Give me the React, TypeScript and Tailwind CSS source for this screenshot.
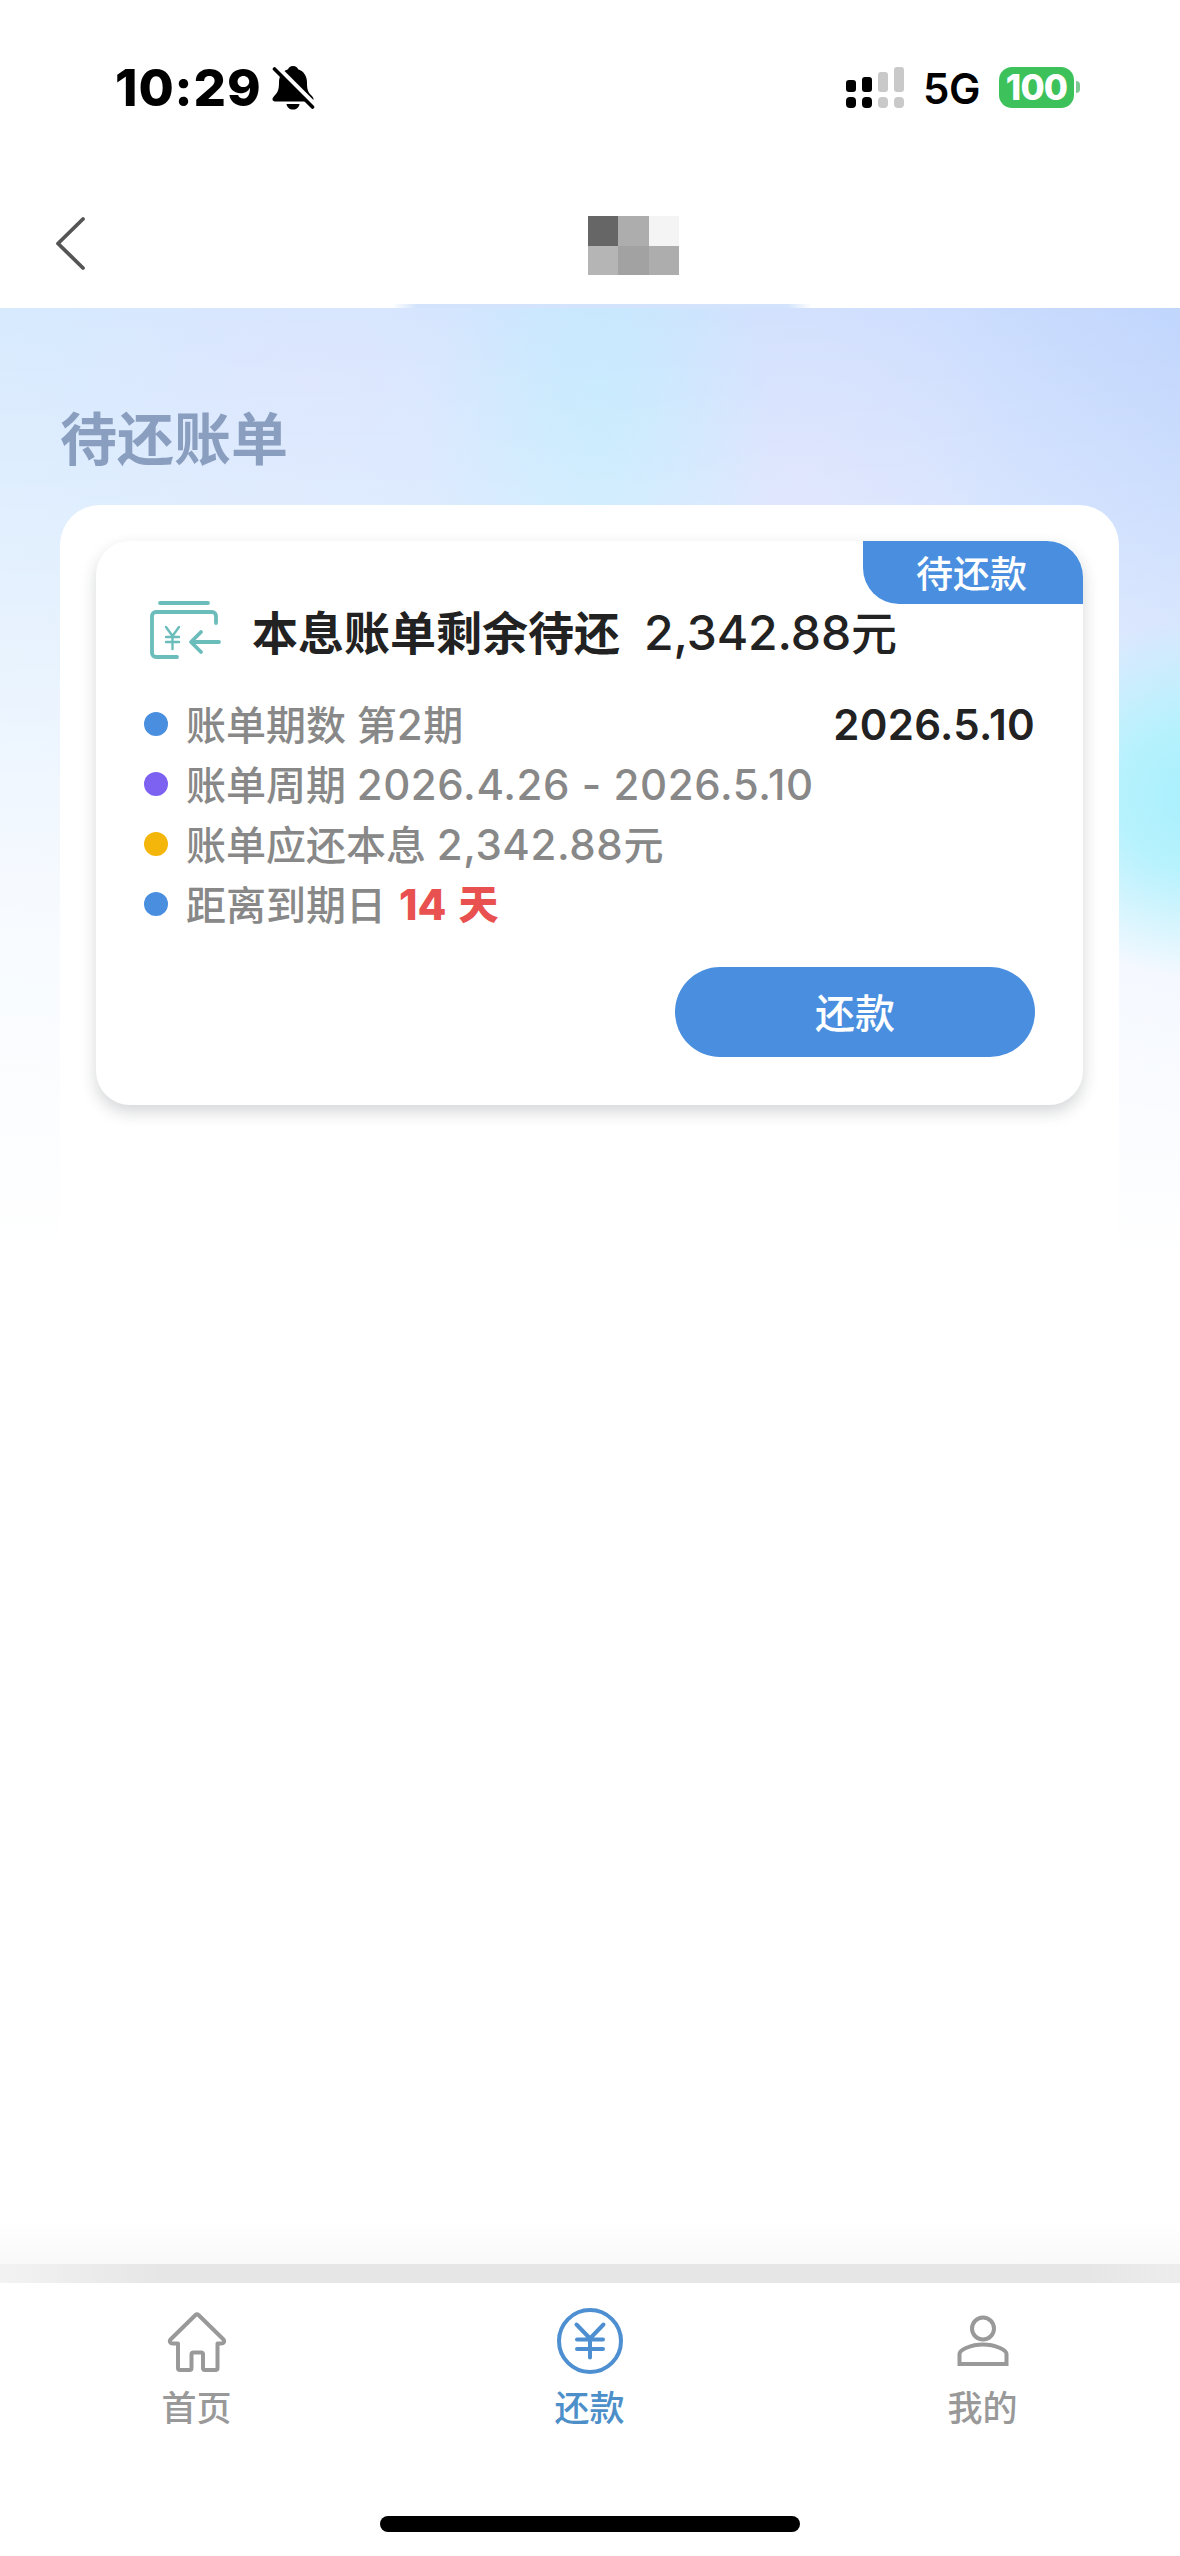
import React from "react";

const details = [
  { dot: "bg-[#4a8fdf]", label: "账单期数 第", value: "2", unit: "期" },
  { dot: "bg-[#7d62f2]", label: "账单周期 ", value: "2026.4.26 - 2026.5.10" },
  { dot: "bg-[#f5b60c]", label: "账单应还本息 ", value: "2,342.88", unit: "元" },
  { dot: "bg-[#4a8fdf]", label: "距离到期日", days: "14", daysUnit: "天" },
];

function BellOff() {
  return (
    <svg className="ml-[10px] h-[46px] w-[44px]" viewBox="0 0 44 46">
      <path
        d="M21 2c-2.700 0-4.400 1.400-4.900 3.300C9.500 7.400 7 12.500 7 18.500c0 7-1.200 9.500-3.700 12.300C1.200 33.200.5 34 .5 35.300c0 1.300 1 2.200 2.500 2.200h35.500c2 0 3-1 3-2.400 0-1.600-1-2.300-3.300-4.800-2.300-2.700-3.200-5.300-3.200-11.800 0-6-2.800-11.100-8.900-13.200C25.500 3.400 23.800 2 21 2Z"
        fill="#000"
      />
      <path d="M14.500 40h13c-.5 3.500-3 5.500-6.500 5.500S15 43.500 14.500 40Z" fill="#000" />
      <path d="m4.500 2.500 39 39" stroke="#fff" strokeWidth="5" />
      <path d="m2.500 5 38 38" stroke="#000" strokeWidth="3.600" strokeLinecap="round" />
    </svg>
  );
}

function StatusBar() {
  return (
    <div className="flex h-[176px] items-start pt-[64px]">
      <span className="ml-[115px] text-[51px] leading-[48px] font-extrabold tracking-[0.9px] text-black">10:29</span>
      <BellOff />
      <div className="flex-1" />
      <svg className="mt-[2px] h-[43px] w-[60px]" viewBox="0 0 60 43">
        <g fill="#000">
          <rect x="0" y="14" width="10" height="12" rx="3" />
          <rect x="16" y="11" width="10" height="15" rx="3" />
          <rect x="0" y="31" width="10" height="11" rx="4" />
          <rect x="16" y="31" width="10" height="11" rx="4" />
        </g>
        <g fill="#c9c9c9">
          <rect x="32" y="6" width="10" height="20" rx="3" />
          <rect x="48" y="1" width="10" height="25" rx="3" />
          <rect x="32" y="31" width="10" height="11" rx="4" />
          <rect x="48" y="31" width="10" height="11" rx="4" />
        </g>
      </svg>
      <span className="ml-[17px] w-[58px] text-[42px] leading-[50px] font-semibold tracking-[-0.5px] text-black">5G</span>
      <div className="mt-[3px] ml-[18px] flex h-[41px] w-[75px] items-center justify-center rounded-[13px] bg-[#3dc25b] text-[35px] leading-none font-extrabold tracking-[-0.8px] text-white">
        100
      </div>
      <div className="mt-[17px] mr-[100px] ml-[2px] h-[12px] w-[4px] rounded-r-full bg-[#7fc894]" />
    </div>
  );
}

function Header() {
  return (
    <header className="flex h-[132px] items-start">
      <svg className="mt-[40px] ml-[54px] h-[56px] w-[32px]" viewBox="0 0 32 56" fill="none">
        <path d="M29 3 4 27.500 29 52" stroke="#555" strokeWidth="3.800" strokeLinecap="round" strokeLinejoin="round" />
      </svg>
      <div className="mt-[40px] ml-[502px] grid h-[59px] w-[91px] grid-cols-3 grid-rows-2">
        <div className="bg-[#666]" />
        <div className="bg-[#adadad]" />
        <div className="bg-[#f4f4f4]" />
        <div className="bg-[#b5b5b5]" />
        <div className="bg-[#a2a2a2]" />
        <div className="bg-[#adadad]" />
      </div>
    </header>
  );
}

function BillIcon() {
  return (
    <svg className="-mt-px h-[62px] w-[72px]" viewBox="0 0 72 62" fill="none" stroke="#6bbdbc" strokeWidth="3.800" strokeLinecap="round" strokeLinejoin="round">
      <path d="M10 3h48" />
      <path d="M66 23v-7a4 4 0 0 0-4-4H6a4 4 0 0 0-4 4v37a4 4 0 0 0 4 4h21" />
      <g strokeWidth="2.400">
        <path d="m16 27 6.500 9 6.500-9M22.500 36v13M16 37h13M16 42h13" />
      </g>
      <path d="M69 42H42M51 32 41 42l10 10" />
    </svg>
  );
}

function BillCard() {
  return (
    <article className="relative h-[564px] rounded-[34px] bg-white px-[48px] pt-[60px] shadow-[0_7px_16px_rgba(30,35,50,0.19)]">
      <div className="absolute top-0 right-0 flex h-[63px] w-[220px] items-center justify-center rounded-tr-[36px] rounded-bl-[36px] bg-[#4a8fdf] pt-[3px] pr-[3px] text-[37px] leading-none font-medium text-white">
        待还款
      </div>
      <div className="flex h-[66px] items-start">
        <div className="ml-[6px] w-[102px]">
          <BillIcon />
        </div>
        <h2 className="text-[46px] leading-[64px] font-bold text-[#222]">本息账单剩余待还</h2>
        <span className="ml-[24px] text-[46px] leading-[64px] font-medium text-[#222]">
          <span className="text-[48px] tracking-[-0.1px]">2,342.88</span>元
        </span>
      </div>
      <ul className="mt-[28px]">
        {details.map((d, i) => (
          <li key={i} className="flex h-[60px] items-center text-[40px] leading-[60px] font-medium text-[#888]">
            <i className={`-mt-[2px] mr-[18px] size-[24px] rounded-full ${d.dot}`} />
            <span className="whitespace-pre">
              {d.label}
              <span className="text-[42px] tracking-[0.6px]">{d.value}</span>
              {d.unit}
            </span>
            {d.days && (
              <b className="ml-[13px] flex gap-[12px] font-extrabold text-[#e8514f]">
                <span className="text-[42px]">{d.days}</span>
                <span>{d.daysUnit}</span>
              </b>
            )}
            {i === 0 && <span className="ml-auto text-[42px] font-semibold tracking-[0.3px] text-[#222]">2026.5.10</span>}
          </li>
        ))}
      </ul>
      <button className="mt-[32px] ml-auto flex h-[90px] w-[360px] items-center justify-center rounded-full bg-[#4a8fdf] pt-[3px] text-[40px] leading-none font-medium text-white">
        还款
      </button>
    </article>
  );
}

function HomeIcon() {
  return (
    <svg className="h-[68px] w-[68px]" viewBox="0 0 68 68" fill="none" stroke="#999" strokeWidth="4" strokeLinejoin="round" strokeLinecap="round">
      <path d="M32.500 8a2.200 2.200 0 0 1 3 0L60 32c2.200 2.200 1 4.500-2 4.500h-3.500V61a2 2 0 0 1-2 2H42a2 2 0 0 1-2-2V47.500a2 2 0 0 0-2-2h-7.500a2 2 0 0 0-2 2V61a2 2 0 0 1-2 2H17a2 2 0 0 1-2-2V36.500H10c-3 0-4.200-2.300-2-4.500Z" />
    </svg>
  );
}

function YenIcon() {
  return (
    <svg className="h-[68px] w-[68px]" viewBox="0 0 68 68" fill="none" stroke="#4d8fd0" strokeWidth="4" strokeLinecap="round" strokeLinejoin="round">
      <circle cx="34" cy="34" r="31" />
      <path d="m20.500 17.500 13.500 14 13.500-14M34 31.500v19M21 32.500h26M21 42h26" />
    </svg>
  );
}

function PersonIcon() {
  return (
    <svg className="h-[68px] w-[68px]" viewBox="0 0 68 68" fill="none" stroke="#999" strokeWidth="4">
      <circle cx="34" cy="21.500" r="11" />
      <path d="M10.500 57V47c0-4 11-9.500 23.500-9.500S57.500 43 57.500 47v10Z" />
    </svg>
  );
}

const tabs = [
  { label: "首页", Icon: HomeIcon, color: "text-[#999]" },
  { label: "还款", Icon: YenIcon, color: "text-[#4d8fc9]" },
  { label: "我的", Icon: PersonIcon, color: "text-[#999]" },
];

export default function App() {
  return (
    <div className="flex h-[2556px] w-[1180px] flex-col overflow-hidden bg-white font-['Inter','Noto_Sans_CJK_SC',sans-serif]">
      <StatusBar />
      <Header />
      <div className="-mt-[4px] ml-[392px] h-[4px] w-[420px] bg-[linear-gradient(90deg,transparent,#d3e3fb_6%,#d3e3fb_94%,transparent)]" />
      <main className="h-[952px] bg-[radial-gradient(200px_180px_at_1200px_490px,#a8f0fd_0%,rgba(176,242,253,0.9)_40%,transparent_100%),linear-gradient(180deg,transparent_0%,rgba(255,255,255,0.22)_21%,rgba(255,255,255,0.8)_64%,rgba(255,255,255,0.9)_82%,white_100%),radial-gradient(170px_320px_at_600px_130px,rgba(194,234,254,0.9)_0%,transparent_100%),radial-gradient(260px_200px_at_310px_70px,rgba(220,228,254,0.8)_0%,transparent_100%),radial-gradient(220px_300px_at_800px_190px,rgba(218,224,253,0.85)_0%,transparent_100%),linear-gradient(90deg,#d8eafe_0%,#d1e5fe_50%,#cddefe_80%,#c1d6fd_100%)] pr-[61px] pl-[60px]">
        <h1 className="h-[197px] pt-[87px] text-[57px] leading-[90px] font-bold text-[#8a9fbf]">待还账单</h1>
        <section className="h-[755px] rounded-t-[40px] bg-white px-[36px] pt-[36px]">
          <BillCard />
        </section>
      </main>
      <div className="flex-1" />
      <div className="h-[44px] bg-[linear-gradient(180deg,white,#f9f9f9)]" />
      <div className="h-[19px] bg-[linear-gradient(90deg,#f3f3f3,#e6e6e6_14%,#e6e6e6_92%,#ededed)]" />
      <nav className="flex h-[273px] flex-col bg-white">
        <div className="grid grid-cols-3 pt-[24px] pr-px">
          {tabs.map(({ label, Icon, color }) => (
            <div key={label} className={`flex flex-col items-center text-[35px] leading-[50px] font-medium ${color}`}>
              <Icon />
              <span className="mt-[8px]">{label}</span>
            </div>
          ))}
        </div>
        <div className="mx-auto mt-auto mb-[24px] h-[16px] w-[420px] rounded-full bg-black" />
      </nav>
    </div>
  );
}
